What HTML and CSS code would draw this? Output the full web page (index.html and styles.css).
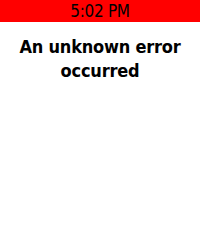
FILE: index.html
```html
<!DOCTYPE html>
<html>
  <head>
    <meta charset="utf-8">
    <title>Error</title>
    <link rel="stylesheet" href="styles.css">
  </head>
  <body>
    <div class="status-bar">
      <span class="clock">5:02 PM</span>
    </div>
    <div class="content">
      <h1 class="error">An unknown error occurred</h1>
    </div>
  </body>
</html>
```

FILE: styles.css
```css
body, html {
  margin: 0;
  padding: 0;
  width: 100%;
  height: 100%;
  background-color: #fff;
  font-family: "DejaVu Sans Condensed", "DejaVu Sans", sans-serif;
}

.status-bar {
  height: 22px;
  background-color: #ff0000;
  display: flex;
  align-items: center;
  justify-content: center;
}

.clock {
  font-size: 17px;
  letter-spacing: -0.3px;
  color: #000;
  line-height: 22px;
}

.content {
  padding: 13px 14px 0;
}

.error {
  margin: 0;
  font-size: 18px;
  letter-spacing: -0.2px;
  font-weight: bold;
  line-height: 24px;
  text-align: center;
  color: #000;
}
```
